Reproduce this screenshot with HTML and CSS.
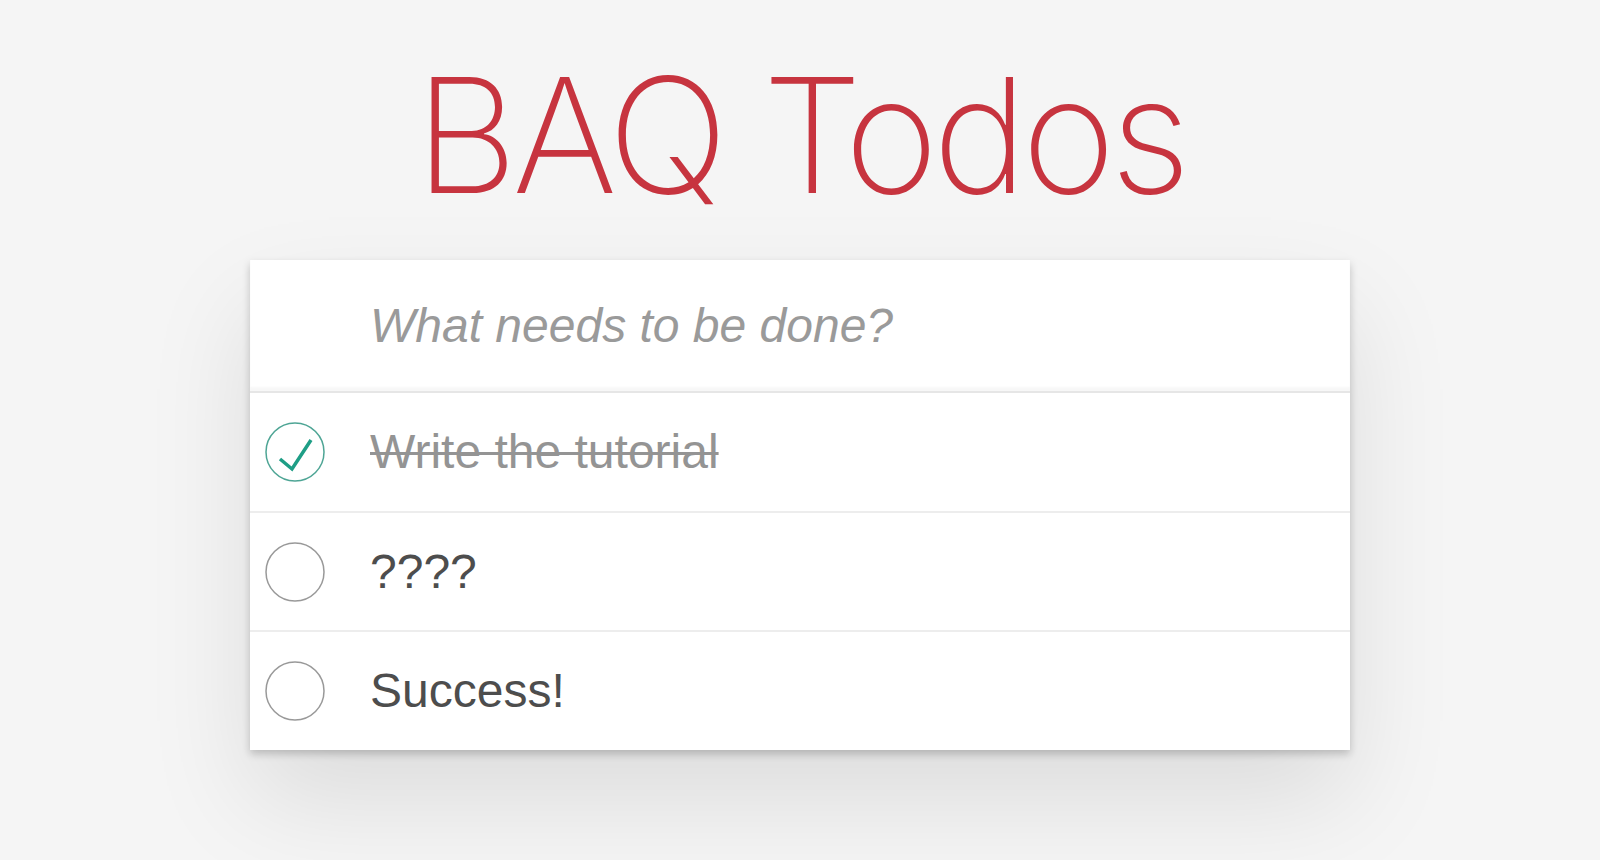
FILE: index.html
```html
<!DOCTYPE html>
<html lang="en">
<head>
<meta charset="utf-8">
<title>BAQ Todos</title>
<link rel="stylesheet" href="styles.css">
</head>
<body>
<section class="todoapp">
  <header class="header">
    <h1 class="title">BAQ Todos</h1>
  </header>
  <div class="card">
    <div class="new-todo">
      <span class="placeholder">What needs to be done?</span>
    </div>
    <ul class="todo-list">
      <li class="todo completed">
        <span class="toggle">
          <svg viewBox="0 0 60 60" width="60" height="60">
            <circle cx="30" cy="30" r="29" fill="none" stroke="#4ea595" stroke-width="1.5"/>
            <path d="M15 37 L27 47 L46 18" fill="none" stroke="#1e9e86" stroke-width="3.5" stroke-linecap="butt" stroke-linejoin="miter"/>
          </svg>
        </span>
        <label class="label">Write the tutorial</label>
      </li>
      <li class="todo">
        <span class="toggle">
          <svg viewBox="0 0 60 60" width="60" height="60">
            <circle cx="30" cy="30" r="29" fill="none" stroke="#999999" stroke-width="1.5"/>
          </svg>
        </span>
        <label class="label">????</label>
      </li>
      <li class="todo">
        <span class="toggle">
          <svg viewBox="0 0 60 60" width="60" height="60">
            <circle cx="30" cy="30" r="29" fill="none" stroke="#999999" stroke-width="1.5"/>
          </svg>
        </span>
        <label class="label">Success!</label>
      </li>
    </ul>
  </div>
</section>
</body>
</html>
```

FILE: styles.css
```css
html, body {
  margin: 0;
  padding: 0;
}

html {
  background: #f5f5f5;
}

body {
  min-height: 100vh;
  background: #f5f5f5;
  font-family: "Liberation Sans", Arial, sans-serif;
  color: #4d4d4d;
  -webkit-font-smoothing: antialiased;
}

.todoapp {
  width: 1100px;
  margin: 0 auto;
  padding-top: 55px;
  padding-bottom: 120px;
}

.header {
  display: flex;
  justify-content: center;
}

.title {
  margin: 0 0 45px 0;
  font-family: Inter, "Liberation Sans", sans-serif;
  font-weight: 200;
  font-size: 160px;
  line-height: 160px;
  color: #c7343f;
  letter-spacing: -5.5px;
}

.card {
  position: relative;
  background: #fff;
  box-shadow: 0 4px 8px rgba(0, 0, 0, 0.2), 0 50px 100px rgba(0, 0, 0, 0.1);
}

.new-todo {
  padding: 32px 32px 32px 120px;
  font-size: 48px;
  line-height: 67.2px;
  box-shadow: inset 0 -4px 2px rgba(0, 0, 0, 0.03);
}

.placeholder {
  font-style: italic;
  font-weight: 300;
  color: #9a9a9a;
}

.todo-list {
  list-style: none;
  margin: 0;
  padding: 0;
  border-top: 2px solid #e6e6e6;
}

.todo {
  display: flex;
  align-items: center;
  border-bottom: 2px solid #ededed;
  font-size: 48px;
}

.todo:last-child {
  border-bottom: none;
}

.toggle {
  display: flex;
  width: 60px;
  height: 60px;
  margin: 0 0 0 15px;
  flex: none;
}

.label {
  padding: 30px 30px 30px 45px;
  line-height: 57.6px;
  color: #4d4d4d;
}

.completed .label {
  color: #949494;
  text-decoration: line-through;
  text-decoration-thickness: 3px;
}
```
